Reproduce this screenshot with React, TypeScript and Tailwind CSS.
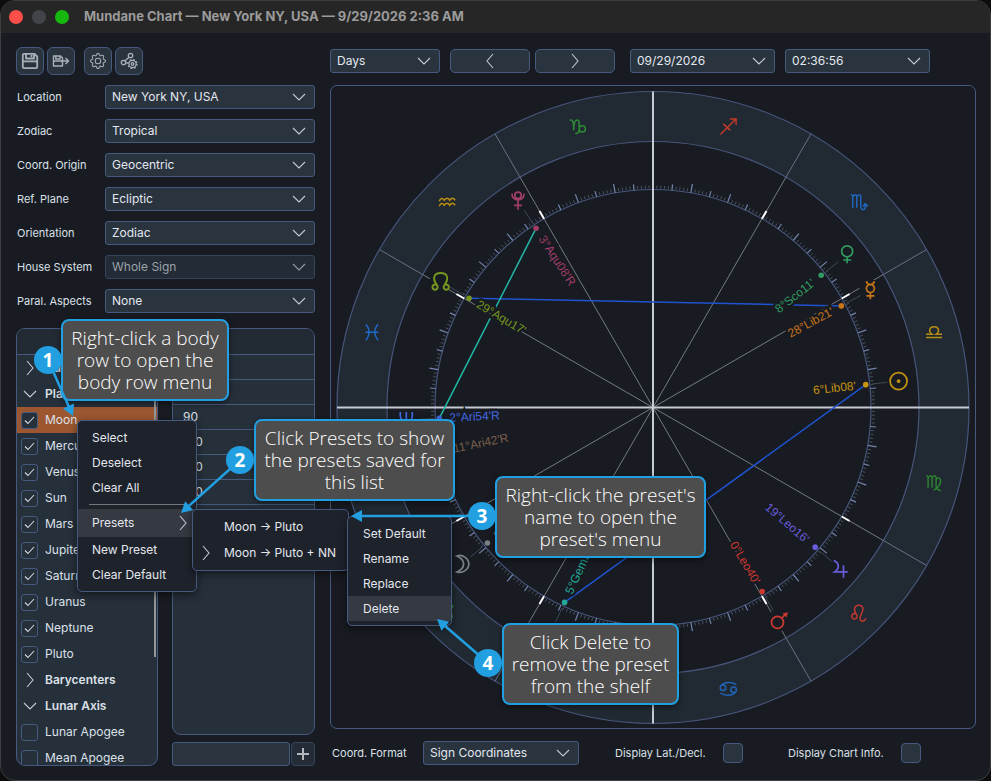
import { ReactNode } from "react";
import { BsGear } from "react-icons/bs";

const SURFACE = "#181b22";

/* ---------- form controls ---------- */

function Chevron({ dir = "down", className = "" }: { dir?: "down" | "left" | "right"; className?: string }) {
  const d = { down: "M2 5 L8 11 L14 5", right: "M5 1 L11 8 L5 15", left: "M11 1 L5 8 L11 15" }[dir];
  return (
    <svg viewBox="0 0 16 16" className={`pointer-events-none size-4 shrink-0 ${className}`} fill="none" stroke="#c4cad3" strokeWidth="1.1" aria-hidden="true">
      <path d={d} />
    </svg>
  );
}

function Dropdown({ id, label, value, className, disabled = false }: { id: string; label?: string; value: string; className?: string; disabled?: boolean }) {
  return (
    <div className={`grid h-6 items-center ${className ?? ""}`}>
      <select
        id={id}
        aria-label={label}
        disabled={disabled}
        className={`col-start-1 row-start-1 h-6 w-full appearance-none rounded-[3px] border pl-1.5 text-xs ${
          disabled ? "border-[#35435c] bg-[#232c36] text-[#9ba1a9]" : "border-[#465a80] bg-[#2a343f] text-[#e3e7ee]"
        }`}
      >
        <option>{value}</option>
      </select>
      <Chevron className={`col-start-1 row-start-1 mr-2 justify-self-end ${disabled ? "opacity-70" : ""}`} />
    </div>
  );
}

function Tick({ id, label, checked = false, className, icon }: { id: string; label?: string; checked?: boolean; className: string; icon?: boolean }) {
  return (
    <span className="grid shrink-0 place-items-center">
      <input
        id={id}
        type="checkbox"
        aria-label={label}
        defaultChecked={checked}
        className={`peer col-start-1 row-start-1 appearance-none border border-[#465a80] ${className}`}
      />
      {icon && (
        <svg viewBox="0 0 17 17" className="pointer-events-none invisible col-start-1 row-start-1 size-[17px] peer-checked:visible" fill="none" stroke="#d3d8e0" strokeWidth="1.1" aria-hidden="true">
          <path d="M4 8.5 L7 11.5 L13 5" />
        </svg>
      )}
    </span>
  );
}

function ToolButton({ label, children }: { label: string; children: ReactNode }) {
  return (
    <button aria-label={label} className="grid size-7 place-items-center rounded-md border border-[#465a80] bg-[#2a343f] text-[#a9afb7]">
      {children}
    </button>
  );
}

/* ---------- sidebar ---------- */

const settings = [
  { id: "location", label: "Location", value: "New York NY, USA" },
  { id: "zodiac", label: "Zodiac", value: "Tropical" },
  { id: "origin", label: "Coord. Origin", value: "Geocentric" },
  { id: "plane", label: "Ref. Plane", value: "Ecliptic" },
  { id: "orientation", label: "Orientation", value: "Zodiac" },
  { id: "houses", label: "House System", value: "Whole Sign", disabled: true },
  { id: "parallels", label: "Paral. Aspects", value: "None" },
];

type Row = { name: string; group?: "open" | "closed"; on?: boolean; active?: boolean };

const bodies: Row[] = [
  { name: "Aux", group: "closed" },
  { name: "Planets", group: "open" },
  { name: "Moon", on: true, active: true },
  { name: "Mercury", on: true },
  { name: "Venus", on: true },
  { name: "Sun", on: true },
  { name: "Mars", on: true },
  { name: "Jupiter", on: true },
  { name: "Saturn", on: true },
  { name: "Uranus", on: true },
  { name: "Neptune", on: true },
  { name: "Pluto", on: true },
  { name: "Barycenters", group: "closed" },
  { name: "Lunar Axis", group: "open" },
  { name: "Lunar Apogee" },
  { name: "Mean Apogee" },
];

function BodyRow({ row }: { row: Row }) {
  if (row.group) {
    return (
      <button aria-expanded={row.group === "open"} className="flex h-[26px] w-full shrink-0 items-center gap-[7px] pl-[5px] text-left font-semibold">
        <Chevron dir={row.group === "open" ? "down" : "right"} />
        {row.name}
      </button>
    );
  }
  const id = `body-${row.name.replace(" ", "-").toLowerCase()}`;
  return (
    <div className={`flex h-[26px] shrink-0 items-center gap-[7px] pl-1 ${row.active ? "bg-[#9c5730]" : ""}`}>
      <Tick id={id} checked={row.on} icon className="size-[17px] rounded-[3px] bg-[#26303b]" />
      <label htmlFor={id}>{row.name}</label>
    </div>
  );
}

function Sidebar() {
  return (
    <aside className="flex w-[299px] shrink-0 flex-col">
      <div className="mb-2.5 flex gap-[3px]">
        <ToolButton label="Save">
          <svg viewBox="0 0 18 18" className="size-[18px]" fill="none" stroke="currentColor" strokeWidth="1.8" strokeLinejoin="round" aria-hidden="true">
            <path d="M3 1.8 H13.5 L16.2 4.5 V15 Q16.2 16.2 15 16.2 H3 Q1.8 16.2 1.8 15 V3 Q1.8 1.8 3 1.8 Z M5 2 V6.5 H13 V2 M1.8 9.3 H16.2" />
            <path d="M10.5 3 V5" />
          </svg>
        </ToolButton>
        <ToolButton label="Save as">
          <svg viewBox="0 0 18 18" className="size-[18px]" fill="none" stroke="currentColor" strokeWidth="1.4" strokeLinejoin="round" aria-hidden="true">
            <path d="M2 4 H8.5 L10.5 6 V14 H1.5 V4 Z M3.8 4 V7 H8 V4 M1.5 9 H10.5" />
            <path d="M9 9 H16.2 M13.5 6 L16.5 9 L13.5 12" />
          </svg>
        </ToolButton>
        <span className="w-[3px]" />
        <ToolButton label="Settings">
          <BsGear className="size-4" aria-hidden="true" />
        </ToolButton>
        <ToolButton label="Aspect settings">
          <svg viewBox="0 0 18 18" className="size-[18px]" fill="none" stroke="currentColor" strokeWidth="1.3" aria-hidden="true">
            <circle cx="3.5" cy="10.5" r="2.2" />
            <circle cx="10.5" cy="3.5" r="2.2" />
            <path d="M5 8.8 L9 5.2 M5.8 10.8 H8" />
            <circle cx="12.5" cy="12" r="1.3" />
            <circle cx="12.5" cy="12" r="3.6" strokeWidth="1.2" />
            <circle cx="12.5" cy="12" r="4.5" strokeWidth="1.2" strokeDasharray="1.8 1.73" />
          </svg>
        </ToolButton>
      </div>

      <div className="flex flex-col gap-2.5">
        {settings.map((s) => (
          <div key={s.id} className="flex items-center pl-px">
            <label htmlFor={s.id} className="w-[88px] text-[11px]">
              {s.label}
            </label>
            <Dropdown id={s.id} value={s.value} disabled={s.disabled} className="flex-1" />
          </div>
        ))}
      </div>

      <div className="mt-[15px] flex min-h-0 flex-1 gap-3.5 text-xs">
        <section className="relative flex w-[142px] flex-col overflow-hidden rounded-[9px] border border-[#465a80] bg-[#26303b]">
          <div className="h-[26px] shrink-0 border-b border-[#465a80] bg-[#222a33]" />
          {bodies.map((r) => (
            <BodyRow key={r.name} row={r} />
          ))}
          <span className="absolute top-7 right-px h-[300px] w-0.5 bg-[#93969a]" />
        </section>
        <div className="flex flex-1 flex-col gap-[7px]">
          <section className="min-h-0 flex-1 overflow-hidden rounded-[9px] border border-[#465a80] bg-[#26303b]">
            <div className="h-[26px] border-b border-[#465a80] bg-[#222a33]" />
            <table className="w-full border-separate border-spacing-0">
              <tbody>
                {["", "", "90", "120", "150", "180"].map((v, i) => (
                  <tr key={i}>
                    <td className="h-[25px] border-b border-[#465a80] p-0 pl-2.5">{v}</td>
                  </tr>
                ))}
              </tbody>
            </table>
          </section>
          <div className="flex gap-px">
            <input aria-label="New angle" className="h-6 w-0 flex-1 rounded-[3px] border border-[#465a80] bg-[#2a343f] px-1.5" />
            <button aria-label="Add angle" className="grid size-6 place-items-center rounded border border-[#35435c] bg-[#242d37]">
              <svg viewBox="0 0 12 12" className="size-3" stroke="#b4b8be" strokeWidth="2" aria-hidden="true">
                <path d="M6 0 V12 M0 6 H12" />
              </svg>
            </button>
          </div>
        </div>
      </div>
    </aside>
  );
}

/* ---------- chart wheel ---------- */

const R_OUTER = 316;
const R_INNER = 266;
const R_SCALE = 218;
const R_DOT = 214;
const R_LABEL = 204;
const R_GLYPH = 247;

/* Zodiac longitude to wheel coordinates; 0 Aries sits on the left, degrees run counter-clockwise. */
function polar(lon: number, r: number): [number, number] {
  const a = (lon * Math.PI) / 180;
  return [-Math.cos(a) * r, Math.sin(a) * r];
}

function Spoke({ lon, from, to, stroke, width }: { lon: number; from: number; to: number; stroke: string; width: number }) {
  const [x1, y1] = polar(lon, from);
  const [x2, y2] = polar(lon, to);
  return <line x1={x1} y1={y1} x2={x2} y2={y2} stroke={stroke} strokeWidth={width} />;
}

const signs: { lon: number; color: string; art: ReactNode }[] = [
  { lon: 45, color: "#2c8a35", art: <path d="M-6-8 C-4-2 4-2 6-8 M5 3 A5 5 0 1 1 -5 3 A5 5 0 1 1 5 3" /> },
  {
    lon: 105,
    color: "#1f63b8",
    art: <path d="M-2.5-.8 A2.8 2.8 0 1 1 -8.1-.8 A2.8 2.8 0 1 1 -2.5-.8 M8.1 1.2 A2.8 2.8 0 1 1 2.5 1.2 A2.8 2.8 0 1 1 8.1 1.2 M-7.5-3 C-4-7 4-7 8-4 M7.5 3.4 C4 7.5 -4 7.5 -8 4.4" />,
  },
  {
    lon: 135,
    color: "#c23730",
    art: <path d="M-1.6 3 A2.7 2.7 0 1 1 -7 3 A2.7 2.7 0 1 1 -1.6 3 M-2.6 1 C-4-1.5 -5-3 -4-5.5 C-2.5-9 4-9 4.2-4 C4.2-1 0 3.5 1.5 6.5 C2.5 9 6 8 7.2 5" />,
  },
  {
    lon: 165,
    color: "#2c8030",
    art: <path d="M-8-7 Q-6.2-7.5 -6-5 V5 M-6-4.5 Q-3.5-9 -2-5.5 V5 M-2-4.5 Q.5-9 2-5.5 V3 Q2.5 7 7 8 M2-3 Q5-6.5 6.5-3 Q7.5 2.5 -.5 7.5" />,
  },
  { lon: 195, color: "#b78c12", art: <path d="M-8 5.3 H8 M-8 2 H-2.2 C-5.8-.5 -5-5.5 0-5.5 C5-5.5 5.8-.5 2.2 2 H8" /> },
  {
    lon: 225,
    color: "#1f66be",
    art: <path d="M-8-7 Q-6.2-7.5 -6-5 V6 M-6-4.5 Q-3.5-9 -2-5.5 V6 M-2-4.5 Q.5-9 2-5.5 V5 Q2.3 8 4.5 8 Q7 7.5 6.6 2.5 M4 4.8 L6.5 2 L9 4.8" />,
  },
  { lon: 255, color: "#c0392b", art: <path d="M-8 8 L8-8 M1.5-7.5 H7.8 V-1.5 M-5-2.5 L2 4" /> },
  {
    lon: 285,
    color: "#2c8a35",
    art: <path d="M-8-6 C-4.5-7.5 -4-4 -4 4 C-4-3 -2.5-6.5 -.5-6.5 C2-6.5 1.5-3 1.5 0 V3 C1.5 6 0 7 -2.5 7 M1.5 2.5 A3 3 0 1 1 7.7 2.5 A3 3 0 1 1 1.5 2.5" />,
  },
  {
    lon: 315,
    color: "#b78c12",
    art: <path d="M-8-.5 Q-6-5.5 -3-1.5 Q0-5.5 2.5-1.5 Q5-5.5 8-1.5 M-8 4.5 Q-6-.5 -3 3.5 Q0-.5 2.5 3.5 Q5-.5 8 3.5" />,
  },
  { lon: 345, color: "#1f6ac8", art: <path d="M-6-8 Q.5 0 -6 8 M6-8 Q-.5 0 6 8 M-6.5 0 H6.5" /> },
];

const planets: { lon: number; color: string; label: string; art: ReactNode }[] = [
  { lon: 186.13, color: "#c4930f", label: "6°Lib08'", art: <><circle r="8.5" /><circle r="1" /></> },
  { lon: 208.35, color: "#c87418", label: "28°Lib21'", art: <path d="M-4-9 C-3-4.5 3-4.5 4-9 M4-1.7 A4 4 0 1 1 -4-1.7 A4 4 0 1 1 4-1.7 M0 2.3 V9 M-4 5.6 H4" /> },
  { lon: 218.18, color: "#329a60", label: "8°Sco11'", art: <path d="M5.5-3.5 A5.5 5.5 0 1 1 -5.5-3.5 A5.5 5.5 0 1 1 5.5-3.5 M0 2 V8.5 M-4 5.2 H4" /> },
  { lon: 120.67, color: "#cc3931", label: "0°Leo40'", art: <><circle cx="-1.5" cy="2.5" r="6" /><path d="M3-2 L6-5.5" /><path d="M3.5-6.5 L9-7.8 L7.5-2.5 Z" fill="currentColor" stroke="none" /></> },
  { lon: 139.27, color: "#6a5bdc", label: "19°Leo16'", art: <path d="M-6.5-8 C-.5-6 -.5 0 -5.5 3.2 H7.5 M3.3-3.5 V9" /> },
  { lon: 11.7, color: "#7a604c", label: "11°Ari42'R", art: <path d="M-2-9 V4 M-5-6 H2 M-2-1 C2-5 7-1 3 4 C1 7 3 9 5 8" /> },
  { lon: 65.6, color: "#23a899", label: "5°Gem34'R", art: <path d="M-5-8 V2 M5-8 V2 M-5-3 H5 M0-8 V4 M2 6 A2 2 0 1 1 -2 6 A2 2 0 1 1 2 6" /> },
  { lon: 2.9, color: "#4169e1", label: "2°Ari54'R", art: <path d="M-6-8 V-4 C-6 3 6 3 6-4 V-8 M0-8 V8 M-4 4.5 H4" /> },
  { lon: 303.13, color: "#a03e66", label: "3°Aqu08'R", art: <path d="M3.2-5.3 A3.2 3.2 0 1 1 -3.2-5.3 A3.2 3.2 0 1 1 3.2-5.3 M-6-7 C-6.5 1.5 6.5 1.5 6-7 M0-.5 V9 M-4 4.7 H4" /> },
  {
    lon: 329.28,
    color: "#75951f",
    label: "29°Aqu17'",
    art: <path strokeWidth="2" d="M-3 5.8 A2.6 2.6 0 1 1 -8.2 5.8 A2.6 2.6 0 1 1 -3 5.8 M8.2 5.8 A2.6 2.6 0 1 1 3 5.8 A2.6 2.6 0 1 1 8.2 5.8 M-3.6 4 C-9-3 -6.5-8.3 0-8.3 C6.5-8.3 9-3 3.6 4" />,
  },
  { lon: 39.3, color: "#7b8087", label: "9°Tau18'", art: <path d="M-5-8 C1-10 7-5 7 0 C7 5 1 10 -5 8 C4 4 4-4 -5-8 Z" /> },
];

const aspects = [
  { from: 329.28, to: 208.35, color: "#1f53cf" },
  { from: 186.13, to: 65.6, color: "#1f53cf" },
  { from: 2.9, to: 303.13, color: "#22b8a6" },
];

function Wheel() {
  const degrees = Array.from({ length: 360 }, (_, i) => i);
  const cusps = Array.from({ length: 12 }, (_, i) => i * 30);
  return (
    <svg viewBox="-322 -321.5 644 642" className="h-full w-full" role="img" aria-label="Chart wheel">
      <circle r={(R_OUTER + R_INNER) / 2} fill="none" stroke="#212a32" strokeWidth={R_OUTER - R_INNER} />
      <g fill="none" stroke="#46557a" strokeWidth="1.2">
        <circle r={R_OUTER} />
        <circle r={R_INNER} />
        <circle r={R_SCALE} />
      </g>
      {degrees.map((d) => {
        if (d % 30 === 0) return null;
        if (d % 5 === 0) return <Spoke key={d} lon={d} from={R_SCALE} to={R_SCALE + (d % 10 === 0 ? 9 : 6)} stroke="#7385ad" width={1.2} />;
        return <Spoke key={d} lon={d} from={R_SCALE + 1} to={R_SCALE + 4} stroke="#4a5362" width={1} />;
      })}
      {cusps.map((d) => (
        <g key={d}>
          <Spoke lon={d} from={0} to={R_INNER} stroke="#767a82" width={1} />
          <Spoke lon={d} from={R_INNER} to={R_OUTER} stroke="#677087" width={1} />
        </g>
      ))}
      {planets.map((p) => (
        <Spoke key={p.label} lon={p.lon} from={R_SCALE + 2} to={R_GLYPH - 11} stroke="#3d4856" width={1} />
      ))}
      {[0, 90, 180, 270].map((d) => (
        <Spoke key={d} lon={d} from={0} to={R_OUTER} stroke="#c5cad3" width={2} />
      ))}
      {cusps
        .filter((d) => d % 90 !== 0)
        .map((d) => (
          <Spoke key={d} lon={d} from={R_SCALE} to={R_SCALE + 9} stroke="#ffffff" width={2} />
        ))}
      {aspects.map((a) => {
        const [x1, y1] = polar(a.from, R_DOT);
        const [x2, y2] = polar(a.to, R_DOT);
        return <line key={a.from} x1={x1} y1={y1} x2={x2} y2={y2} stroke={a.color} strokeWidth="1.5" />;
      })}
      {signs.map((s) => {
        const [x, y] = polar(s.lon, 291);
        return (
          <g key={s.lon} transform={`translate(${x} ${y})`} fill="none" stroke={s.color} strokeWidth="1.5">
            {s.art}
          </g>
        );
      })}
      {planets.map((p) => {
        const [dx, dy] = polar(p.lon, R_DOT);
        const [gx, gy] = polar(p.lon, R_GLYPH);
        const [tx, ty] = polar(p.lon, R_LABEL);
        const left = tx < 0;
        const angle = left ? -p.lon : 180 - p.lon;
        return (
          <g key={p.label} color={p.color}>
            <circle cx={dx} cy={dy} r="2.8" fill={p.color} />
            <circle cx={gx} cy={gy} r="11" fill={SURFACE} />
            <g transform={`translate(${gx} ${gy})`} fill="none" stroke={p.color} strokeWidth="1.7">
              {p.art}
            </g>
            <text
              transform={`translate(${tx} ${ty}) rotate(${angle})`}
              dy="4"
              textAnchor={left ? "start" : "end"}
              className="font-['Liberation_Sans',Arial,sans-serif] text-[12px]"
              fill={p.color}
              stroke={SURFACE}
              strokeWidth="5"
              paintOrder="stroke"
            >
              {p.label}
            </text>
          </g>
        );
      })}
    </svg>
  );
}

function ChartArea() {
  return (
    <section className="flex min-w-0 flex-1 flex-col pt-0.5 pb-px">
      <div className="flex">
        <Dropdown id="step" label="Step" value="Days" className="w-[110px]" />
        <button aria-label="Previous" className="ml-2.5 grid h-6 w-20 place-items-center rounded-[5px] border border-[#465a80] bg-[#2a343f]">
          <Chevron dir="left" />
        </button>
        <button aria-label="Next" className="ml-[5px] grid h-6 w-20 place-items-center rounded-[5px] border border-[#465a80] bg-[#2a343f]">
          <Chevron dir="right" />
        </button>
        <Dropdown id="date" label="Date" value="09/29/2026" className="ml-[15px] w-[145px]" />
        <Dropdown id="time" label="Time" value="02:36:56" className="ml-2.5 w-[145px]" />
      </div>
      <div className="my-3 min-h-0 flex-1 overflow-hidden rounded-[7px] border border-[#465a80]">
        <Wheel />
      </div>
      <div className="flex h-6 items-center pl-0.5 text-[11px]">
        <label htmlFor="format" className="w-[91px]">
          Coord. Format
        </label>
        <Dropdown id="format" value="Sign Coordinates" className="w-[156px]" />
        <label htmlFor="latdecl" className="ml-9 w-[108px]">
          Display Lat./Decl.
        </label>
        <Tick id="latdecl" className="size-5 rounded bg-[#2a343f]" />
        <label htmlFor="info" className="ml-[45px] w-[113px]">
          Display Chart Info.
        </label>
        <Tick id="info" className="size-5 rounded bg-[#2a343f]" />
      </div>
    </section>
  );
}

/* ---------- context menus ---------- */

const menuBox = "absolute flex flex-col border border-[#465a80] bg-[#1e222b] py-1 text-xs text-[#e3e7ee] rounded-[5px] shadow-[0_3px_8px_rgba(0,0,0,0.5)]";

function MenuItem({ children, className = "" }: { children: ReactNode; className?: string }) {
  return (
    <button role="menuitem" className={`flex h-[25px] shrink-0 items-center text-left ${className}`}>
      {children}
    </button>
  );
}

function ContextMenus() {
  return (
    <>
      <div role="menu" className={`${menuBox} top-[420px] left-[77px] w-[120px]`}>
        <MenuItem className="pl-3.5">Select</MenuItem>
        <MenuItem className="pl-3.5">Deselect</MenuItem>
        <MenuItem className="pl-3.5">Clear All</MenuItem>
        <hr className="mx-[11px] my-1 border-[#74777c]" />
        <MenuItem className="h-[28px] justify-between bg-[#353942] pr-[5px] pl-3.5">
          Presets
          <Chevron dir="right" />
        </MenuItem>
        <MenuItem className="pl-3.5">New Preset</MenuItem>
        <MenuItem className="pl-3.5">Clear Default</MenuItem>
      </div>
      <div role="menu" className={`${menuBox} top-[509px] left-[192px] w-[157px]`}>
        <MenuItem className="h-[26px] pl-[31px]">Moon → Pluto</MenuItem>
        <MenuItem className="h-[26px] gap-2.5 pl-[5px]">
          <Chevron dir="right" />
          Moon → Pluto + NN
        </MenuItem>
      </div>
      <div role="menu" className={`${menuBox} top-[516px] left-[347px] w-[105px]`}>
        <MenuItem className="pl-[15px]">Set Default</MenuItem>
        <MenuItem className="pl-[15px]">Rename</MenuItem>
        <MenuItem className="pl-[15px]">Replace</MenuItem>
        <MenuItem className="bg-[#353942] pl-[15px]">Delete</MenuItem>
      </div>
    </>
  );
}

/* ---------- tutorial callouts ---------- */

const callouts = [
  { n: 1, badge: [48, 360], tip: [73, 416], box: "top-[319px] left-[61px] w-[168px]", lines: ["Right-click a body", "row to open the", "body row menu"] },
  { n: 2, badge: [240, 460], tip: [181, 513], box: "top-[419px] left-[254px] w-[201px]", lines: ["Click Presets to show", "the presets saved for", "this list"] },
  { n: 3, badge: [482, 516], tip: [351, 516], box: "top-[476px] left-[495px] w-[211px]", lines: ["Right-click the preset's", "name to open the", "preset's menu"] },
  { n: 4, badge: [488, 663], tip: [437, 619], box: "top-[623px] left-[502px] w-[177px]", lines: ["Click Delete to", "remove the preset", "from the shelf"] },
];

function Callouts() {
  return (
    <div className="pointer-events-none absolute inset-0 font-['Open_Sans','Noto_Sans',sans-serif]">
      {callouts.map((c) => (
        <p key={c.n} className={`absolute rounded-lg border-2 border-[#229fe0] bg-[#4d4d4d] py-1.5 text-center text-[19px] leading-[22px] font-light whitespace-nowrap text-white shadow-[0_2px_6px_rgba(0,0,0,0.5)] ${c.box}`}>
          {c.lines.map((l) => (
            <span key={l} className="block">
              {l}
            </span>
          ))}
        </p>
      ))}
      <svg className="absolute inset-0 h-full w-full" aria-hidden="true">
        {callouts.map((c) => {
          const [bx, by] = c.badge;
          const [tx, ty] = c.tip;
          const a = Math.atan2(ty - by, tx - bx);
          return (
            <g key={c.n} fill="#229fe0">
              <line x1={bx} y1={by} x2={tx - Math.cos(a) * 8} y2={ty - Math.sin(a) * 8} stroke="#229fe0" strokeWidth="2.5" />
              <path d="M0 0 L-11 -6 V6 Z" transform={`translate(${tx} ${ty}) rotate(${(a * 180) / Math.PI})`} />
              <circle cx={bx} cy={by} r="14" />
              <text x={bx} y={by + 7} textAnchor="middle" className="fill-white text-[19px] font-bold">
                {c.n}
              </text>
            </g>
          );
        })}
      </svg>
    </div>
  );
}

export default function App() {
  return (
    <div className="h-screen bg-[#0d0d0e]">
      <div className="relative flex h-full flex-col overflow-hidden rounded-[15px] border border-[#3d3e41] bg-[#181b22] font-['Inter','Liberation_Sans',sans-serif] text-[#dbe0e8]">
        <header className="flex h-8 shrink-0 items-center gap-[9px] bg-[#262626] pl-2">
          <span className="size-3.5 rounded-full bg-[#fa4f48]" />
          <span className="size-3.5 rounded-full bg-[#414449]" />
          <span className="size-3.5 rounded-full bg-[#16b80f]" />
          <h1 className="ml-1.5 text-[13px] font-bold text-[#9b9b9b]">Mundane Chart — New York NY, USA — 9/29/2026 2:36 AM</h1>
        </header>
        <main className="flex min-h-0 flex-1 gap-[15px] pt-3.5 pr-3.5 pb-3.5 pl-[15px]">
          <Sidebar />
          <ChartArea />
        </main>
      </div>
      <div className="pointer-events-none absolute inset-0">
        <div className="pointer-events-auto font-['Inter','Liberation_Sans',sans-serif]">
          <ContextMenus />
        </div>
        <Callouts />
      </div>
    </div>
  );
}
